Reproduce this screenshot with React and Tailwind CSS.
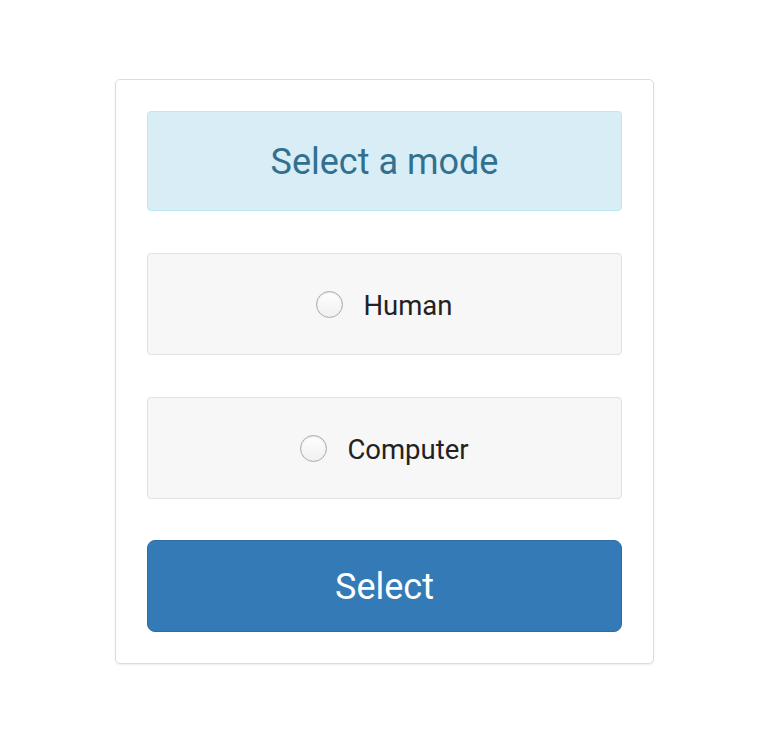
export default function App() {
  const Radio = () => (
    <span className="inline-block w-[27px] h-[27px] rounded-full border border-[#a9a9a9] bg-gradient-to-b from-white to-[#f0f0f0] shadow-[inset_0_1px_2px_rgba(0,0,0,0.1)]" />
  );
  return (
    <div className="w-[770px] h-[736px] bg-white" style={{ fontFamily: "Roboto, 'Liberation Sans', sans-serif" }}>
      <div className="pt-[79px] pl-[115px]">
        <div className="w-[539px] border border-[#dcdcdc] rounded-[5px] shadow-[0_1px_2px_rgba(0,0,0,0.08)] p-[31px] flex flex-col gap-[42px]">
          <div className="h-[100px] pt-[2px] rounded-[4px] bg-[#d9edf7] border border-[#bce8f1] flex items-center justify-center text-[#31708f] text-[36px]">
            Select a mode
          </div>
          <div className="h-[102px] rounded-[4px] bg-[#f7f7f7] border border-[#e1e1e1] flex items-center justify-center gap-[20px] text-[#222] text-[27.5px]">
            <Radio />
            <span className="pt-[3px]">Human</span>
          </div>
          <div className="h-[102px] rounded-[4px] bg-[#f7f7f7] border border-[#e1e1e1] flex items-center justify-center gap-[20px] text-[#222] text-[27.5px]">
            <Radio />
            <span className="pt-[3px]">Computer</span>
          </div>
          <div className="h-[92px] -mt-[1px] pt-[2px] rounded-[8px] bg-[#337ab7] border border-[#2e6da4] flex items-center justify-center text-white text-[36px]">
            Select
          </div>
        </div>
      </div>
    </div>
  );
}
